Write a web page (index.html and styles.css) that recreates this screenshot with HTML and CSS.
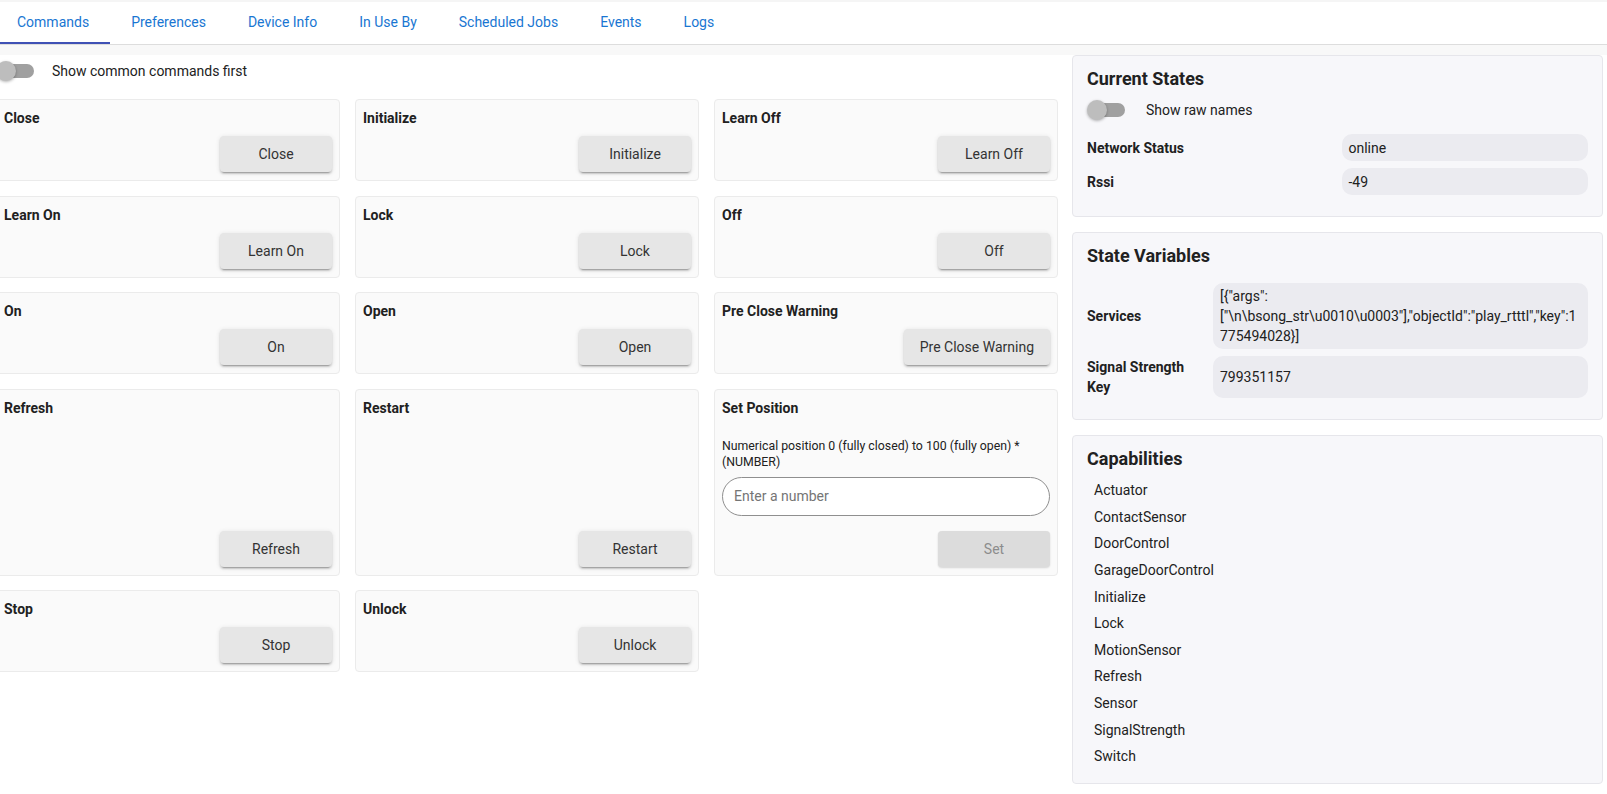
FILE: index.html
```html
<!DOCTYPE html>
<html lang="en">
<head>
  <meta charset="UTF-8">
  <meta name="viewport" content="width=device-width, initial-scale=1.0">
  <title>Device - Commands</title>
  <link rel="stylesheet" href="styles.css">
</head>
<body>
  <header class="tabbar">
    <nav class="tabs">
      <div class="tab active">Commands</div>
      <div class="tab">Preferences</div>
      <div class="tab">Device Info</div>
      <div class="tab">In Use By</div>
      <div class="tab">Scheduled Jobs</div>
      <div class="tab">Events</div>
      <div class="tab">Logs</div>
    </nav>
  </header>
  <div class="band"></div>

  <div class="page">
    <section class="commands-col">
      <div class="switch-row">
        <span class="switch"></span>
        <span class="switch-label">Show common commands first</span>
      </div>

      <div class="commands">
        <div class="command">
          <div class="command-title">Close</div>
          <button class="btn">Close</button>
        </div>
        <div class="command">
          <div class="command-title">Initialize</div>
          <button class="btn">Initialize</button>
        </div>
        <div class="command">
          <div class="command-title">Learn Off</div>
          <button class="btn">Learn Off</button>
        </div>

        <div class="command">
          <div class="command-title">Learn On</div>
          <button class="btn">Learn On</button>
        </div>
        <div class="command">
          <div class="command-title">Lock</div>
          <button class="btn">Lock</button>
        </div>
        <div class="command">
          <div class="command-title">Off</div>
          <button class="btn">Off</button>
        </div>

        <div class="command">
          <div class="command-title">On</div>
          <button class="btn">On</button>
        </div>
        <div class="command">
          <div class="command-title">Open</div>
          <button class="btn">Open</button>
        </div>
        <div class="command">
          <div class="command-title">Pre Close Warning</div>
          <button class="btn">Pre Close Warning</button>
        </div>

        <div class="command">
          <div class="command-title">Refresh</div>
          <button class="btn">Refresh</button>
        </div>
        <div class="command">
          <div class="command-title">Restart</div>
          <button class="btn">Restart</button>
        </div>
        <div class="command">
          <div class="command-title">Set Position</div>
          <label class="param-label" for="set-position">Numerical position 0 (fully closed) to 100 (fully open) * (NUMBER)</label>
          <input type="text" id="set-position" class="param-input" placeholder="Enter a number">
          <button class="btn btn-disabled" disabled>Set</button>
        </div>

        <div class="command">
          <div class="command-title">Stop</div>
          <button class="btn">Stop</button>
        </div>
        <div class="command">
          <div class="command-title">Unlock</div>
          <button class="btn">Unlock</button>
        </div>
      </div>
    </section>

    <aside class="side-col">
      <div class="card">
        <h2>Current States</h2>
        <div class="switch-row switch-row-card">
          <span class="switch"></span>
          <span class="switch-label">Show raw names</span>
        </div>
        <div class="kv kv-half">
          <div class="kv-key">Network Status</div>
          <div class="kv-value">online</div>
          <div class="kv-key">Rssi</div>
          <div class="kv-value">-49</div>
        </div>
      </div>

      <div class="card">
        <h2>State Variables</h2>
        <div class="kv kv-narrow">
          <div class="kv-key">Services</div>
          <div class="kv-value">[{"args":["\n\bsong_str\u0010\u0003"],"objectId":"play_rtttl","key":1775494028}]</div>
          <div class="kv-key">Signal Strength Key</div>
          <div class="kv-value">799351157</div>
        </div>
      </div>

      <div class="card card-caps">
        <h2>Capabilities</h2>
        <ul class="caps">
          <li>Actuator</li>
          <li>ContactSensor</li>
          <li>DoorControl</li>
          <li>GarageDoorControl</li>
          <li>Initialize</li>
          <li>Lock</li>
          <li>MotionSensor</li>
          <li>Refresh</li>
          <li>Sensor</li>
          <li>SignalStrength</li>
          <li>Switch</li>
        </ul>
      </div>
    </aside>
  </div>
</body>
</html>
```

FILE: styles.css
```css
body {
  font-family: Roboto, "Liberation Sans", Arial, sans-serif;
  font-size: 14px;
  margin: 0;
  color: #212121;
  background-color: #fff;
}

.tabbar {
  border-top: 2px solid #f5f5f5;
  border-bottom: 1px solid #dddddd;
}

.tabs {
  display: flex;
  margin-left: -4px;
}

.tab {
  padding: 0 21px;
  line-height: 40px;
  border-bottom: 2px solid transparent;
  color: #1976d2;
  cursor: pointer;
}

.tab.active {
  border-bottom-color: #3f51b5;
}

.band {
  height: 10px;
  background-color: #f8f8f8;
}

.page {
  display: grid;
  grid-template-columns: 2fr 1fr;
  gap: 14px;
  width: 1607px;
  margin-left: -4px;
  align-items: start;
}

/* switch */

.switch-row {
  display: flex;
  align-items: center;
  height: 32px;
  margin-bottom: 12px;
}

.switch {
  position: relative;
  flex: none;
  width: 38px;
  height: 20px;
  margin-right: 18px;
}

.switch::before {
  content: "";
  position: absolute;
  left: 3px;
  top: 3px;
  width: 35px;
  height: 14px;
  border-radius: 7px;
  background-color: #a0a0a0;
}

.switch::after {
  content: "";
  position: absolute;
  left: 0;
  top: 0;
  width: 20px;
  height: 20px;
  border-radius: 50%;
  background-color: #bdbdbd;
  box-shadow: 0 1px 3px rgba(0, 0, 0, 0.3);
}

.switch-row-card {
  height: 38px;
  margin: 1px 0 5px;
}

.switch-row-card .switch {
  margin-right: 21px;
}

/* commands */

.commands {
  display: grid;
  grid-template-columns: repeat(3, 1fr);
  gap: 14.5px 15px;
}

.command {
  display: flex;
  flex-direction: column;
  padding: 8px 7px;
  background-color: #fafafa;
  border: 1px solid #ebebeb;
  border-radius: 4px;
}

.command-title {
  font-weight: 700;
  line-height: 20px;
  margin-bottom: 8px;
}

.btn {
  align-self: flex-end;
  margin-top: auto;
  min-width: 112px;
  height: 36px;
  padding: 0 16px;
  font-family: inherit;
  font-size: 14px;
  color: #333;
  background-color: #e6e6e6;
  border: none;
  border-radius: 4px;
  box-shadow: 0 3px 1px -2px rgba(0, 0, 0, 0.2), 0 2px 2px 0 rgba(0, 0, 0, 0.14), 0 1px 5px 0 rgba(0, 0, 0, 0.12);
  cursor: pointer;
}

.btn-disabled {
  color: #8c8c8c;
  background-color: #dcdcdc;
  box-shadow: 0 1px 2px rgba(0, 0, 0, 0.15);
  cursor: default;
}

.param-label {
  margin-top: 12px;
  font-size: 12.3px;
  line-height: 16px;
}

.param-input {
  box-sizing: border-box;
  width: 100%;
  height: 39px;
  margin: 7px 0 15px;
  padding: 0 11px;
  font-family: inherit;
  font-size: 14px;
  color: #212121;
  background-color: #fff;
  border: 1px solid #8f8f8f;
  border-radius: 20px;
  outline: none;
}

.param-input::placeholder {
  color: #757575;
}

/* side cards */

.side-col {
  display: flex;
  flex-direction: column;
  gap: 15px;
}

.card {
  padding: 12px 14px 21px;
  background-color: #f7f7fa;
  border: 1px solid #e6e6eb;
  border-radius: 4px;
}

.card h2 {
  margin: 0;
  font-size: 18px;
  font-weight: 700;
  line-height: 22px;
}

.kv {
  display: grid;
  gap: 7px 8px;
}

.kv-half {
  grid-template-columns: 1fr 1fr;
}

.kv-narrow {
  grid-template-columns: 118px 1fr;
  margin-top: 16px;
}

.kv-key {
  align-self: center;
  padding: 1px 0;
  font-weight: 700;
  line-height: 20px;
}

.kv-value {
  display: flex;
  align-items: center;
  box-sizing: border-box;
  min-height: 27px;
  padding: 3px 7px;
  line-height: 20px;
  background-color: #ebebf0;
  border-radius: 10px;
  overflow-wrap: anywhere;
}

.card-caps {
  padding-bottom: 13px;
}

.caps {
  list-style: none;
  margin: 7px 0 0;
  padding: 0 0 0 7px;
}

.caps li {
  line-height: 20px;
  padding: 3.3px 0;
}
```
